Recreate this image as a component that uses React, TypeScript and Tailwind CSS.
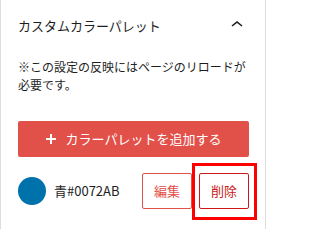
import React from "react";

export default function App() {
  return (
    <div
      className="w-[266px] h-[229px] bg-white border-l border-r border-[#dddddd] pl-[17px] pr-[16px]"
      style={{ fontFamily: '"Noto Sans CJK JP", "Noto Sans", sans-serif' }}
    >
      <div className="h-[50px] flex items-center justify-between">
        <span className="text-[13px] text-[#1e1e1e] leading-none">カスタムカラーパレット</span>
        <svg width="24" height="24" viewBox="0 0 24 24" className="text-[#1e1e1e]">
          <path d="M6.5 12.4L12 8l5.5 4.4-.9 1.2L12 10l-4.5 3.6-1-1.2z" fill="currentColor" />
        </svg>
      </div>
      <p className="mt-[8px] text-[12px] leading-[18px] text-[#1e1e1e]">
        ※この設定の反映にはページのリロードが必要です。
      </p>
      <button className="mt-[27px] w-full h-[36px] rounded-[2px] bg-[#e2504a] text-white flex items-center justify-center gap-[10px] text-[13px]">
        <svg width="10" height="10" viewBox="0 0 10 10">
          <path d="M4 0h2v4h4v2H6v4H4V6H0V4h4z" fill="white" />
        </svg>
        <span>カラーパレットを追加する</span>
      </button>
      <div className="mt-[16px] flex items-center">
        <div className="w-[28px] h-[28px] rounded-full bg-[#0072AB]" />
        <span className="ml-[8px] text-[13px] text-[#1e1e1e]">青#0072AB</span>
        <div className="ml-auto flex items-center gap-[7px]">
          <button className="w-[50px] h-[36px] border border-[#e2504a] rounded-[2px] text-[#e2504a] text-[13px]">
            編集
          </button>
          <div className="relative">
            <button className="w-[50px] h-[36px] border border-[#cc1818] rounded-[2px] text-[#cc1818] text-[13px]">
              削除
            </button>
            <div className="absolute left-[-7px] right-[-8px] top-[-10px] bottom-[-11px] border-[3px] border-[#ff0000] pointer-events-none" />
          </div>
        </div>
      </div>
    </div>
  );
}
